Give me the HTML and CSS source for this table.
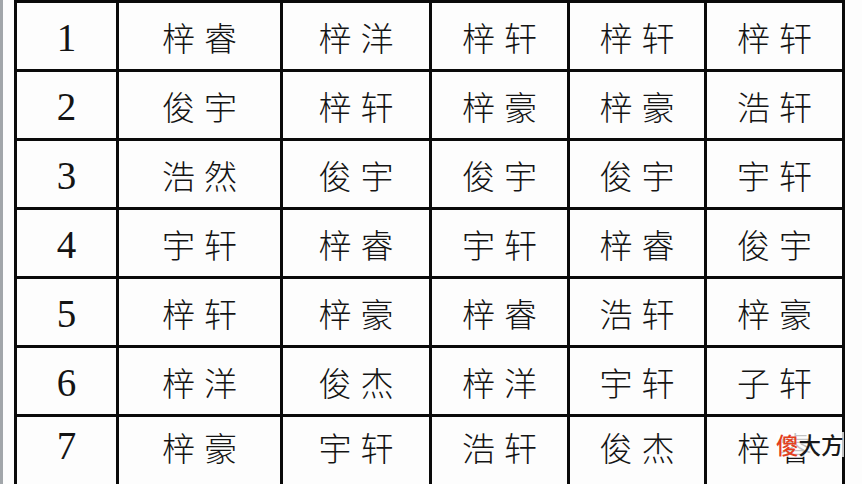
FILE: index.html
```html
<!DOCTYPE html>
<html lang="zh">
<head>
<meta charset="utf-8">
<title>名字表</title>
<link rel="stylesheet" href="styles.css">
</head>
<body>
<div class="page">
  <div class="edge"></div>
  <div class="sheet">
    <div class="grid">
      <div class="num">1</div><div class="name">梓睿</div><div class="name">梓洋</div><div class="name">梓轩</div><div class="name">梓轩</div><div class="name">梓轩</div>
      <div class="num">2</div><div class="name">俊宇</div><div class="name">梓轩</div><div class="name">梓豪</div><div class="name">梓豪</div><div class="name">浩轩</div>
      <div class="num">3</div><div class="name">浩然</div><div class="name">俊宇</div><div class="name">俊宇</div><div class="name">俊宇</div><div class="name">宇轩</div>
      <div class="num">4</div><div class="name">宇轩</div><div class="name">梓睿</div><div class="name">宇轩</div><div class="name">梓睿</div><div class="name">俊宇</div>
      <div class="num">5</div><div class="name">梓轩</div><div class="name">梓豪</div><div class="name">梓睿</div><div class="name">浩轩</div><div class="name">梓豪</div>
      <div class="num">6</div><div class="name">梓洋</div><div class="name">俊杰</div><div class="name">梓洋</div><div class="name">宇轩</div><div class="name">子轩</div>
      <div class="num">7</div><div class="name">梓豪</div><div class="name">宇轩</div><div class="name">浩轩</div><div class="name">俊杰</div><div class="name">梓睿</div>
    </div>
    <div class="mark"><span class="mark-red">傻</span>大方</div>
  </div>
</div>
</body>
</html>
```

FILE: styles.css
```css
html, body {
  margin: 0;
  padding: 0;
  background: #fdfdfd;
  overflow: hidden;
}

.page {
  display: flex;
  width: 862px;
  height: 484px;
  overflow: hidden;
}

.edge {
  width: 3px;
  flex: none;
  background: #a2a6aa;
}

.sheet {
  position: relative;
  margin-left: 11px;
}

.grid {
  display: grid;
  grid-template-columns: 99px 161px 146px 135px 134px 135px;
  grid-template-rows: 66px 66px 66px 66px 66px 66px 80px;
  gap: 3px;
  padding: 0 3px 3px 3px;
  border-top: 3px solid #0a0a0a;
  background: #0a0a0a;
}

.grid > div {
  background: #fdfdfd;
  display: flex;
  align-items: center;
  justify-content: center;
  color: #141414;
}

.grid > .num {
  font-family: "Liberation Serif", serif;
  font-size: 39px;
  padding-top: 2px;
}

.grid > .name {
  font-family: "Noto Sans CJK SC", sans-serif;
  font-weight: 300;
  font-size: 33px;
  letter-spacing: 9px;
  padding-left: 9px;
  padding-top: 2px;
}

.grid > div:nth-child(n+37) {
  align-items: flex-start;
  padding-top: 6px;
}

.mark {
  position: absolute;
  left: 762px;
  top: 432px;
  white-space: nowrap;
  font-family: "Noto Sans CJK SC", sans-serif;
  font-weight: 500;
  font-size: 22.5px;
  line-height: 25px;
  color: #1a1a1a;
  background: rgba(253, 253, 253, 0.75);
}

.mark-red {
  color: #e4401e;
}
```
